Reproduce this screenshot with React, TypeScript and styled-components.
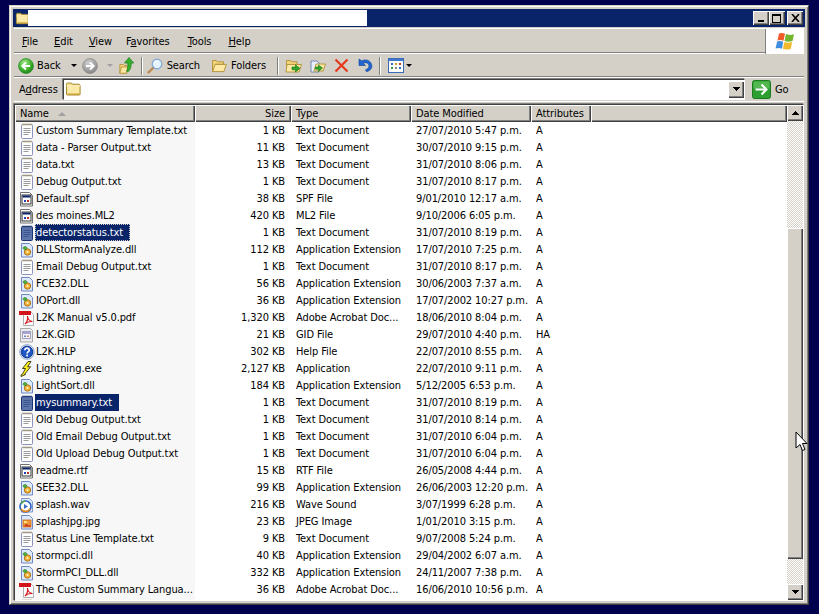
import styled, { createGlobalStyle } from 'styled-components'

const GlobalStyle = createGlobalStyle`
  html, body {
    margin: 0;
    background: #00004f;
    overflow: hidden;
  }
  body {
    font-family: "DejaVu Sans Condensed", "DejaVu Sans", sans-serif;
    font-stretch: condensed;
    font-size: 11px;
    letter-spacing: -0.1px;
    color: #000;
  }
`

const Screen = styled.div`
  width: 819px;
  height: 614px;
  padding: 5px 0 0 9px;
  box-sizing: border-box;
  position: relative;
`

const Win = styled.div`
  width: 800px;
  height: 600px;
  box-sizing: border-box;
  background: #d4d0c8;
  border: 1px solid;
  border-color: #d4d0c8 #404040 #404040 #d4d0c8;
  box-shadow: inset 1px 1px #fff, inset -1px -1px #808080;
  padding: 3px;
  display: flex;
  flex-direction: column;
`

const TitleBar = styled.div`
  height: 18px;
  flex: none;
  background: #0a246a;
  display: flex;
  align-items: center;
  padding: 0 2px;
`

const TitleBlank = styled.div`
  width: 339px;
  height: 16px;
  background: #fff;
  margin-left: -1px;
`

const TitleButtons = styled.div`
  margin-left: auto;
  display: flex;
`

const CaptionButton = styled.div<{ $gap?: number }>`
  width: 16px;
  height: 14px;
  box-sizing: border-box;
  background: #d4d0c8;
  box-shadow: inset 1px 1px #fff, inset -1px -1px #404040, inset -2px -2px #808080;
  margin-left: ${({ $gap }) => $gap ?? 0}px;
  display: flex;
  align-items: center;
  justify-content: center;
`

const Bars = styled.div`
  flex: none;
  margin: 1px 0 0 1px;
  width: 790px;
  display: flex;
  flex-direction: column;
`

const BandBase = styled.div`
  display: flex;
  align-items: center;
  background: #d4d0c8;
  box-sizing: border-box;
`

const MenuBand = styled(BandBase)`
  height: 26px;
  border-top: 1px solid #fff;
  border-bottom: 1px solid #fff;
  box-shadow: inset 0 -1px #808080;
  padding-left: 8px;
  gap: 16px;
`

const MenuItem = styled.span<{ $nudge?: number }>`
  margin-left: ${({ $nudge }) => $nudge ?? 0}px;
`

const Key = styled.span`
  text-decoration: underline;
`

const LogoBox = styled.div`
  margin-left: auto;
  align-self: stretch;
  width: 39px;
  background: #fff;
  box-shadow: inset 1px 0 #808080;
  margin-bottom: -1px;
  display: flex;
  align-items: center;
  justify-content: center;
`

const ToolBand = styled(BandBase)`
  height: 24px;
  border-bottom: 1px solid #fff;
  box-shadow: inset 0 -1px #808080;
  padding-left: 4px;
`

const ToolLabel = styled.span<{ $left?: number }>`
  margin-left: ${({ $left }) => $left ?? 4}px;
`

const ToolIcon = styled.span<{ $left?: number }>`
  margin-left: ${({ $left }) => $left ?? 0}px;
  display: flex;
`

const Caret = styled.span<{ $left: number; $muted?: boolean }>`
  margin-left: ${({ $left }) => $left}px;
  width: 0;
  height: 0;
  border: 3px solid transparent;
  border-bottom-width: 0;
  border-top: 3px solid ${({ $muted }) => ($muted ? '#a0a0a0' : '#000')};
`

const Separator = styled.span<{ $left: number }>`
  margin-left: ${({ $left }) => $left}px;
  width: 2px;
  height: 18px;
  background: linear-gradient(to right, #808080 50%, #fff 50%);
`

const AddressBand = styled(BandBase)`
  height: 24px;
  padding: 0 0 1px 5px;
  border-bottom: 1px solid #fff;
`

const AddressLabel = styled.span`
  width: 44px;
`

const AddressInput = styled.div`
  width: 682px;
  height: 21px;
  box-sizing: border-box;
  background: #fff;
  border: 1px solid;
  border-color: #404040 #fff #fff #404040;
  box-shadow: -1px -1px #808080;
  display: flex;
  align-items: center;
  padding-left: 1px;
`

const DropButton = styled.div`
  margin-left: auto;
  width: 16px;
  height: 17px;
  background: #d4d0c8;
  box-shadow: inset 1px 1px #fff, inset -1px -1px #404040, inset -2px -2px #808080;
  display: flex;
  align-items: center;
  justify-content: center;
`

const GoIcon = styled.span`
  margin-left: 7px;
  display: flex;
`

const GoLabel = styled.span`
  margin-left: 4px;
`

const ListFrame = styled.div`
  margin: 2px 1px 0 1px;
  flex: 1;
  min-height: 0;
  display: flex;
  background: #fff;
  border: 1px solid;
  border-color: #404040 #fff #fff #404040;
  box-shadow: -1px -1px #808080;
`

const ListMain = styled.div`
  flex: 1;
  min-width: 0;
  overflow: hidden;
  position: relative;
`

const columns = '180px 96px 120px 120px 60px 1fr'

const HeaderRow = styled.div`
  display: grid;
  grid-template-columns: ${columns};
  height: 17px;
`

const HeaderCell = styled.div<{ $right?: boolean }>`
  background: #d4d0c8;
  box-shadow: inset 1px 1px #fff, inset -1px -1px #404040, inset -2px -2px #808080;
  display: flex;
  align-items: center;
  justify-content: ${({ $right }) => ($right ? 'flex-end' : 'flex-start')};
  padding: 0 6px 0 5px;
`

const SortMark = styled.span`
  margin-left: 9px;
  width: 0;
  height: 0;
  border: 4px solid transparent;
  border-top-width: 0;
  border-bottom: 4px solid #a0a0a0;
`

const FileRow = styled.div`
  display: grid;
  grid-template-columns: ${columns};
  height: 17px;
  align-items: center;
  background: linear-gradient(to right, #f7f7f7 180px, #fff 180px);
`

const NameCell = styled.div`
  display: flex;
  align-items: center;
  padding-left: 4px;
  white-space: nowrap;
`

const NameText = styled.span<{ $selected?: boolean; $focused?: boolean }>`
  height: 17px;
  line-height: 17px;
  padding: 0 ${({ $selected }) => ($selected ? 7 : 1)}px 0 1px;
  box-sizing: border-box;
  background: ${({ $selected }) => ($selected ? '#0a246a' : 'transparent')};
  color: ${({ $selected }) => ($selected ? '#fff' : '#000')};
  outline: ${({ $focused }) => ($focused ? '1px dotted #d4d0c8' : 'none')};
  outline-offset: -1px;
`

const SizeCell = styled.div`
  text-align: right;
  padding-right: 6px;
  white-space: nowrap;
`

const TextCell = styled.div`
  padding-left: 5px;
  white-space: nowrap;
`

const ScrollBar = styled.div`
  width: 16px;
  flex: none;
  display: flex;
  flex-direction: column;
  background: repeating-conic-gradient(#d4d0c8 0 25%, #fff 0 50%) 0 0 / 2px 2px;
`

const ScrollButton = styled.div`
  height: 16px;
  flex: none;
  background: #d4d0c8;
  box-shadow: inset 1px 1px #fff, inset -1px -1px #404040, inset -2px -2px #808080;
  display: flex;
  align-items: center;
  justify-content: center;
`

const ScrollTrack = styled.div<{ $size: number }>`
  height: ${({ $size }) => $size}px;
  flex: none;
`

const ScrollThumb = styled.div`
  height: 331px;
  flex: none;
  background: #d4d0c8;
  box-shadow: inset 1px 1px #fff, inset -1px -1px #404040, inset -2px -2px #808080;
`

const Pointer = styled.svg`
  position: absolute;
  left: 795px;
  top: 431px;
`

const Arrow = ({ up }: { up?: boolean }) => (
  <svg width="7" height="4" viewBox="0 0 7 4" shapeRendering="crispEdges">
    <path d={up ? 'M3 0h1v1h1v1h1v1h1v1H0V3h1V2h1V1h1z' : 'M0 0h7v1H6v1H5v1H4v1H3V3H2V2H1V1H0z'} fill="#000" />
  </svg>
)

const FolderClosed = ({ small }: { small?: boolean }) => (
  <svg width={small ? 14 : 16} height={small ? 13 : 16} viewBox="0 0 16 15">
    <path d="M1.5 3.5V2.2l1-.7h4l1 1.2h6.6l1 1v9.3l-1 .5h-11.6l-1-.5z" fill="#f6dd8e" stroke="#a58a2e" />
    <path d="M2.5 5.5h11.6v7H2.5z" fill="#fbe9a8" />
    <path d="M1.5 4.5h13.8" stroke="#fff6d0" />
    <path d="M2.5 12.6h12" stroke="#c79e30" strokeWidth="1.2" />
  </svg>
)

const FolderOpen = () => (
  <svg width="16" height="16" viewBox="0 0 16 16">
    <path d="M1.5 2.5h4l1 1.3h6v2.5H4.500l-2 7.200h-1z" fill="#f3d37a" stroke="#b08f34" strokeWidth=".9" />
    <path d="M4 6.400h11.300l-2.400 7.200H1.600z" fill="#fde9a4" stroke="#b08f34" strokeWidth=".9" />
  </svg>
)

const Globe = ({ gray }: { gray?: boolean }) => {
  const id = gray ? 'orbGray' : 'orbGreen'
  return (
    <svg width="16" height="16" viewBox="0 0 16 16">
      <defs>
        <radialGradient id={id} cx="40%" cy="30%" r="75%">
          <stop offset="0" stopColor={gray ? '#d0d0d0' : '#a6e88c'} />
          <stop offset=".6" stopColor={gray ? '#a4a4a4' : '#41b22e'} />
          <stop offset="1" stopColor={gray ? '#808080' : '#1a7f1a'} />
        </radialGradient>
      </defs>
      <circle cx="8" cy="8" r="7.4" fill={`url(#${id})`} stroke={gray ? '#8c8c8c' : '#2a8a2a'} strokeWidth=".8" />
      <path
        d={gray ? 'M4 8h7.5M8 4.5 11.7 8 8 11.5' : 'M12 8H4.5M8 4.5 4.3 8 8 11.5'}
        fill="none"
        stroke="#fff"
        strokeWidth="1.9"
      />
    </svg>
  )
}

const UpFolder = () => (
  <svg width="15" height="17" viewBox="0 0 15 17">
    <path d="M.8 7.500h3.500l1 1h2.500v7.700H.8z" fill="#f3d37a" stroke="#b08f34" strokeWidth=".8" />
    <path d="M2.500 10h6.500l-1.500 6.200H.8z" fill="#fde9a4" stroke="#b08f34" strokeWidth=".8" />
    <path d="M10 .5 14.700 6h-2.500c0 3.500-.7 6.200-2.500 8.300H7.500c1.200-2.200 1.500-5 1.300-8.300H5.500z" fill="#35b22b" stroke="#1b7a1b" strokeWidth=".7" />
  </svg>
)

const Magnifier = () => (
  <svg width="16" height="16" viewBox="0 0 16 16">
    <path d="M6.5 9.5 1.6 14.4" stroke="#c08a50" strokeWidth="2.4" strokeLinecap="round" />
    <circle cx="10" cy="6" r="4.8" fill="#e4f3ff" stroke="#7ca6d8" strokeWidth="1.2" />
    <path d="M7.800 5c.5-1.200 1.400-1.700 2.600-1.800" stroke="#fff" strokeWidth="1.200" fill="none" />
  </svg>
)

const MoveTo = ({ copy }: { copy?: boolean }) => (
  <svg width="17" height="16" viewBox="0 0 17 16">
    {copy ? (
      <path d="M2 3h6l2 2v9H2z" fill="#e6eefc" stroke="#6a7fb0" strokeWidth=".9" />
    ) : (
      <path d="M1.5 2.5h4l1 1.3h5.500v4H1.500z" fill="#f3d37a" stroke="#b08f34" strokeWidth=".9" />
    )}
    <path d={copy ? 'M7 6h9.500l-2.400 7H5z' : 'M2 6.500h14.500L14 14H1z'} fill="#fde9a4" stroke="#b08f34" strokeWidth=".9" />
    <path d={copy ? 'M6.500 9h3V7l4 3-4 3.400V11.200h-3z' : 'M7 9h3.500V6.800l4.500 3.600-4.500 3.600v-2.200H7z'} fill="#2fa32a" stroke="#167216" strokeWidth=".6" />
  </svg>
)

const DeleteX = () => (
  <svg width="15" height="15" viewBox="0 0 15 15">
    <path d="M1.5 1.5 13.5 13.5M13.5 1.5 1.5 13.5" stroke="#e5391c" strokeWidth="2.2" />
  </svg>
)

const Undo = () => (
  <svg width="16" height="15" viewBox="0 0 16 15">
    <path d="M2 1v6.500h6.500L6.200 5.200c2.200-1.100 5-.4 5.600 1.700.6 2-.7 4-3.400 5l1.200 1.800c4-1 6-4 5-7.200C13.500 2.300 8.700.7 4.700 2.800L2 1z" fill="#1f66d0" stroke="#123f94" strokeWidth=".6" />
  </svg>
)

const Views = () => (
  <svg width="16" height="15" viewBox="0 0 16 15" shapeRendering="crispEdges">
    <rect x=".5" y=".5" width="15" height="14" fill="#fff" stroke="#3a6ab8" />
    <rect x="1" y="1" width="14" height="2" fill="#3f77cf" />
    <rect x="3" y="5" width="2" height="2" fill="#2d6bd0" />
    <rect x="7" y="5" width="2" height="2" fill="#d8a020" />
    <rect x="11" y="5" width="2" height="2" fill="#c84030" />
    <rect x="3" y="9" width="2" height="2" fill="#30a040" />
    <rect x="7" y="9" width="2" height="2" fill="#888" />
    <rect x="11" y="9" width="2" height="2" fill="#2d6bd0" />
  </svg>
)

const GoArrow = () => (
  <svg width="19" height="19" viewBox="0 0 19 19">
    <rect x=".5" y=".5" width="18" height="18" rx="2" fill="#2d9e30" stroke="#1c7a1f" />
    <rect x="1.500" y="1.500" width="16" height="7" rx="1" fill="#52b84f" />
    <path d="M3.500 9.500h11M9.500 4.500l5 5-5 5" fill="none" stroke="#fff" strokeWidth="2" />
  </svg>
)

const WinFlag = () => (
  <svg width="21" height="20" viewBox="0 0 21 20">
    <path d="M5 1.500C7 .5 9 .8 11 1.800L9.500 8.800C7.500 7.800 5.500 7.600 3.500 8.500z" fill="#ee5a2a" />
    <path d="M12 2.100c2.500 1 5 1.100 8 .1L18.500 9c-3 1-5.500.9-8-.1z" fill="#74b52f" />
    <path d="M3.200 9.500c2-.9 4-.7 6 .3L8 16.800c-2.200-1-4.300-1.100-6.500-.3z" fill="#3d8ee0" />
    <path d="M10.400 10c2.500 1 5 1.100 7.800.1l-1.500 6.800c-2.800 1-5.300.9-7.800-.1z" fill="#f2b92c" />
  </svg>
)

type FileKind = 'txt' | 'app' | 'dll' | 'pdf' | 'gid' | 'hlp' | 'exe' | 'wav' | 'jpg'

const Page = ({ stroke = '#6f89c4', fill = '#dce9fc' }: { stroke?: string; fill?: string }) => (
  <path d="M2.500 1.500h8l3 3v10.500h-11z" fill={fill} stroke={stroke} />
)

const FileIcon = ({ kind, selected }: { kind: FileKind; selected?: boolean }) => {
  let body
  if (kind === 'txt') {
    const paper = selected ? '#5d75aa' : '#fdfdfd'
    const edge = selected ? '#1d3570' : '#8d93b8'
    const line = selected ? '#3a5490' : '#9a9a9a'
    body = (
      <>
        <rect x="2.500" y="1.500" width="11" height="14" rx="1" fill={paper} stroke={edge} />
        <path d="M4 .5v2M6 .5v2M8 .5v2M10 .5v2M12 .5v2" stroke={selected ? '#2a4480' : '#a89c68'} />
        <path d="M4.500 5.500h7M4.500 7.500h7M4.500 9.500h7M4.500 11.500h5" stroke={line} />
      </>
    )
  } else if (kind === 'app') {
    body = (
      <>
        <path d="M1.500 1.500h9l3 3v10.500h-12z" fill="#fff" stroke="#707070" />
        <rect x="3" y="4" width="9" height="9" fill="#fff" stroke="#303030" />
        <rect x="3.500" y="4.500" width="8" height="2" fill="#0a246a" />
        <rect x="5" y="9" width="2" height="2" fill="#2040c0" />
        <rect x="8" y="9" width="2" height="2" fill="#c03020" />
      </>
    )
  } else if (kind === 'dll') {
    body = (
      <>
        <Page />
        <circle cx="8.500" cy="10" r="3.200" fill="#eeb23a" stroke="#b07818" />
        <circle cx="8.500" cy="10" r="1" fill="#fff3c0" />
        <path d="M4 6.500a2 2 0 1 1 4 0l-1.500 1.500z" fill="#4fb03c" stroke="#2d7a25" strokeWidth=".6" />
      </>
    )
  } else if (kind === 'pdf') {
    body = (
      <>
        <path d="M4.500 1.500h7l3 3v11h-10z" fill="#fff" stroke="#b0b0b0" />
        <rect x="0" y="1" width="12" height="4" fill="#d4121a" />
        <path d="M6 14c2-2 3-5 2.500-8 .2 3 2 5 5 5.500-3-.3-5.500.3-7.500 2.500z" fill="none" stroke="#d4121a" strokeWidth="1.100" />
      </>
    )
  } else if (kind === 'gid') {
    body = (
      <>
        <path d="M1.500 1.500h10l2 2v11.500h-12z" fill="#ececec" stroke="#a8a8a8" />
        <rect x="3.500" y="4.500" width="8" height="7" fill="#f8f8ff" stroke="#a0a0c0" />
        <rect x="4" y="5" width="7" height="2" fill="#a8a4d4" />
        <rect x="5" y="8.500" width="2" height="1.500" fill="#6a80c8" />
        <rect x="8" y="8.500" width="2" height="1.500" fill="#c88a6a" />
      </>
    )
  } else if (kind === 'hlp') {
    body = (
      <>
        <circle cx="8" cy="8" r="7.300" fill="#dfe8f8" stroke="#8fa4cc" />
        <circle cx="8" cy="8" r="5.800" fill="#1f55c4" stroke="#123a90" />
        <path d="M5.900 6.300c.1-3 4.300-3 4.300-.1 0 1.700-2.100 1.800-2.100 3.400" fill="none" stroke="#fff" strokeWidth="1.700" />
        <rect x="7.200" y="10.600" width="1.800" height="1.800" fill="#fff" />
      </>
    )
  } else if (kind === 'exe') {
    body = (
      <path d="M9 .5 3.500 7.500h3L3.200 13.500l-1 .2-.2 1.800 4.500-2-.9-.2 6-7.500H8.500L12 .5z" fill="#fff21e" stroke="#303010" strokeWidth=".9" />
    )
  } else if (kind === 'wav') {
    body = (
      <>
        <Page stroke="#7f96c8" />
        <circle cx="6.500" cy="9.500" r="5.500" fill="#fff" stroke="#2e66c2" strokeWidth="1.600" />
        <path d="M2 12a5.500 5.500 0 0 0 9 0" fill="none" stroke="#e88a1e" strokeWidth="1.600" />
        <path d="M2 7a5.500 5.500 0 0 1 4-3" fill="none" stroke="#52a83a" strokeWidth="1.600" />
        <path d="M5 7l4 2.500L5 12z" fill="#3c6ec4" />
      </>
    )
  } else if (kind === 'jpg') {
    body = (
      <>
        <Page />
        <rect x="4" y="6" width="8" height="7" fill="#f29a38" stroke="#c8641c" strokeWidth=".8" />
        <rect x="5" y="7" width="3" height="2" fill="#ffe080" />
        <path d="M4.500 12.500l3-3 2 2 1-1 1.500 2z" fill="#c83c1c" />
      </>
    )
  }
  return (
    <svg width="16" height="16" viewBox="0 0 16 16" style={{ flex: 'none' }}>
      {body}
    </svg>
  )
}

const TXT = 'Text Document'
const DLL = 'Application Extension'

const files: { name: string; size: string; type: string; date: string; attr: string; kind: FileKind; sel?: 'on' | 'focus' }[] = [
  { name: 'Custom Summary Template.txt', size: '1 KB', type: TXT, date: '27/07/2010 5:47 p.m.', attr: 'A', kind: 'txt' },
  { name: 'data - Parser Output.txt', size: '11 KB', type: TXT, date: '30/07/2010 9:15 p.m.', attr: 'A', kind: 'txt' },
  { name: 'data.txt', size: '13 KB', type: TXT, date: '31/07/2010 8:06 p.m.', attr: 'A', kind: 'txt' },
  { name: 'Debug Output.txt', size: '1 KB', type: TXT, date: '31/07/2010 8:17 p.m.', attr: 'A', kind: 'txt' },
  { name: 'Default.spf', size: '38 KB', type: 'SPF File', date: '9/01/2010 12:17 a.m.', attr: 'A', kind: 'app' },
  { name: 'des moines.ML2', size: '420 KB', type: 'ML2 File', date: '9/10/2006 6:05 p.m.', attr: 'A', kind: 'app' },
  { name: 'detectorstatus.txt', size: '1 KB', type: TXT, date: '31/07/2010 8:19 p.m.', attr: 'A', kind: 'txt', sel: 'focus' },
  { name: 'DLLStormAnalyze.dll', size: '112 KB', type: DLL, date: '17/07/2010 7:25 p.m.', attr: 'A', kind: 'dll' },
  { name: 'Email Debug Output.txt', size: '1 KB', type: TXT, date: '31/07/2010 8:17 p.m.', attr: 'A', kind: 'txt' },
  { name: 'FCE32.DLL', size: '56 KB', type: DLL, date: '30/06/2003 7:37 a.m.', attr: 'A', kind: 'dll' },
  { name: 'IOPort.dll', size: '36 KB', type: DLL, date: '17/07/2002 10:27 p.m.', attr: 'A', kind: 'dll' },
  { name: 'L2K Manual v5.0.pdf', size: '1,320 KB', type: 'Adobe Acrobat Doc...', date: '18/06/2010 8:04 p.m.', attr: 'A', kind: 'pdf' },
  { name: 'L2K.GID', size: '21 KB', type: 'GID File', date: '29/07/2010 4:40 p.m.', attr: 'HA', kind: 'gid' },
  { name: 'L2K.HLP', size: '302 KB', type: 'Help File', date: '22/07/2010 8:55 p.m.', attr: 'A', kind: 'hlp' },
  { name: 'Lightning.exe', size: '2,127 KB', type: 'Application', date: '22/07/2010 9:11 p.m.', attr: 'A', kind: 'exe' },
  { name: 'LightSort.dll', size: '184 KB', type: DLL, date: '5/12/2005 6:53 p.m.', attr: 'A', kind: 'dll' },
  { name: 'mysummary.txt', size: '1 KB', type: TXT, date: '31/07/2010 8:19 p.m.', attr: 'A', kind: 'txt', sel: 'on' },
  { name: 'Old Debug Output.txt', size: '1 KB', type: TXT, date: '31/07/2010 8:14 p.m.', attr: 'A', kind: 'txt' },
  { name: 'Old Email Debug Output.txt', size: '1 KB', type: TXT, date: '31/07/2010 6:04 p.m.', attr: 'A', kind: 'txt' },
  { name: 'Old Upload Debug Output.txt', size: '1 KB', type: TXT, date: '31/07/2010 6:04 p.m.', attr: 'A', kind: 'txt' },
  { name: 'readme.rtf', size: '15 KB', type: 'RTF File', date: '26/05/2008 4:44 p.m.', attr: 'A', kind: 'app' },
  { name: 'SEE32.DLL', size: '99 KB', type: DLL, date: '26/06/2003 12:20 p.m.', attr: 'A', kind: 'dll' },
  { name: 'splash.wav', size: '216 KB', type: 'Wave Sound', date: '3/07/1999 6:28 p.m.', attr: 'A', kind: 'wav' },
  { name: 'splashjpg.jpg', size: '23 KB', type: 'JPEG Image', date: '1/01/2010 3:15 p.m.', attr: 'A', kind: 'jpg' },
  { name: 'Status Line Template.txt', size: '9 KB', type: TXT, date: '9/07/2008 5:24 p.m.', attr: 'A', kind: 'txt' },
  { name: 'stormpci.dll', size: '40 KB', type: DLL, date: '29/04/2002 6:07 a.m.', attr: 'A', kind: 'dll' },
  { name: 'StormPCI_DLL.dll', size: '332 KB', type: DLL, date: '24/11/2007 7:38 p.m.', attr: 'A', kind: 'dll' },
  { name: 'The Custom Summary Langua...', size: '36 KB', type: 'Adobe Acrobat Doc...', date: '16/06/2010 10:56 p.m.', attr: 'A', kind: 'pdf' },
  { name: '', size: '', type: '', date: '', attr: '', kind: 'txt' },
]

export default function App() {
  return (
    <Screen>
      <GlobalStyle />
      <Win>
        <TitleBar>
          <FolderClosed small />
          <TitleBlank />
          <TitleButtons>
            <CaptionButton>
              <svg width="8" height="8" viewBox="0 0 8 8" shapeRendering="crispEdges"><rect x="1" y="6" width="6" height="2" fill="#000" /></svg>
            </CaptionButton>
            <CaptionButton>
              <svg width="10" height="9" viewBox="0 0 10 9" shapeRendering="crispEdges"><path d="M.5 1.500h8v7h-8z" fill="none" stroke="#000" /><rect y="0" width="9" height="2" fill="#000" /></svg>
            </CaptionButton>
            <CaptionButton $gap={2}>
              <svg width="9" height="8" viewBox="0 0 9 8"><path d="M1 0 8 8M8 0 1 8" stroke="#000" strokeWidth="1.600" /></svg>
            </CaptionButton>
          </TitleButtons>
        </TitleBar>
        <Bars>
          <MenuBand>
            <MenuItem><Key>F</Key>ile</MenuItem>
            <MenuItem><Key>E</Key>dit</MenuItem>
            <MenuItem><Key>V</Key>iew</MenuItem>
            <MenuItem $nudge={-2}>F<Key>a</Key>vorites</MenuItem>
            <MenuItem $nudge={2}><Key>T</Key>ools</MenuItem>
            <MenuItem $nudge={1}><Key>H</Key>elp</MenuItem>
            <LogoBox><WinFlag /></LogoBox>
          </MenuBand>
          <ToolBand>
            <Globe />
            <ToolLabel $left={3}>Back</ToolLabel>
            <Caret $left={10} />
            <ToolIcon $left={5}><Globe gray /></ToolIcon>
            <Caret $left={9} $muted />
            <ToolIcon $left={6}><UpFolder /></ToolIcon>
            <Separator $left={7} />
            <ToolIcon $left={4}><Magnifier /></ToolIcon>
            <ToolLabel>Search</ToolLabel>
            <ToolIcon $left={11}><FolderOpen /></ToolIcon>
            <ToolLabel>Folders</ToolLabel>
            <Separator $left={11} />
            <ToolIcon $left={6}><MoveTo /></ToolIcon>
            <ToolIcon $left={7}><MoveTo copy /></ToolIcon>
            <ToolIcon $left={8}><DeleteX /></ToolIcon>
            <ToolIcon $left={8}><Undo /></ToolIcon>
            <Separator $left={6} />
            <ToolIcon $left={7}><Views /></ToolIcon>
            <Caret $left={2} />
          </ToolBand>
          <AddressBand>
            <AddressLabel>A<Key>d</Key>dress</AddressLabel>
            <AddressInput>
              <FolderClosed />
              <DropButton><Arrow /></DropButton>
            </AddressInput>
            <GoIcon><GoArrow /></GoIcon>
            <GoLabel>Go</GoLabel>
          </AddressBand>
        </Bars>
        <ListFrame>
          <ListMain>
            <HeaderRow>
              <HeaderCell>Name<SortMark /></HeaderCell>
              <HeaderCell $right>Size</HeaderCell>
              <HeaderCell>Type</HeaderCell>
              <HeaderCell>Date Modified</HeaderCell>
              <HeaderCell>Attributes</HeaderCell>
              <HeaderCell />
            </HeaderRow>
            {files.map((f, i) => (
              <FileRow key={i}>
                <NameCell>
                  <FileIcon kind={f.kind} selected={!!f.sel} />
                  <NameText $selected={!!f.sel} $focused={f.sel === 'focus'}>{f.name}</NameText>
                </NameCell>
                <SizeCell>{f.size}</SizeCell>
                <TextCell>{f.type}</TextCell>
                <TextCell>{f.date}</TextCell>
                <TextCell>{f.attr}</TextCell>
              </FileRow>
            ))}
          </ListMain>
          <ScrollBar>
            <ScrollButton><Arrow up /></ScrollButton>
            <ScrollTrack $size={107} />
            <ScrollThumb />
            <ScrollTrack $size={25} />
            <ScrollButton><Arrow /></ScrollButton>
          </ScrollBar>
        </ListFrame>
      </Win>
      <Pointer width="13" height="22" viewBox="0 0 13 22">
        <path d="M1 1v16l4-3.500 2.500 6 2.500-1-2.500-6H12z" fill="#fff" stroke="#000" />
      </Pointer>
    </Screen>
  )
}
